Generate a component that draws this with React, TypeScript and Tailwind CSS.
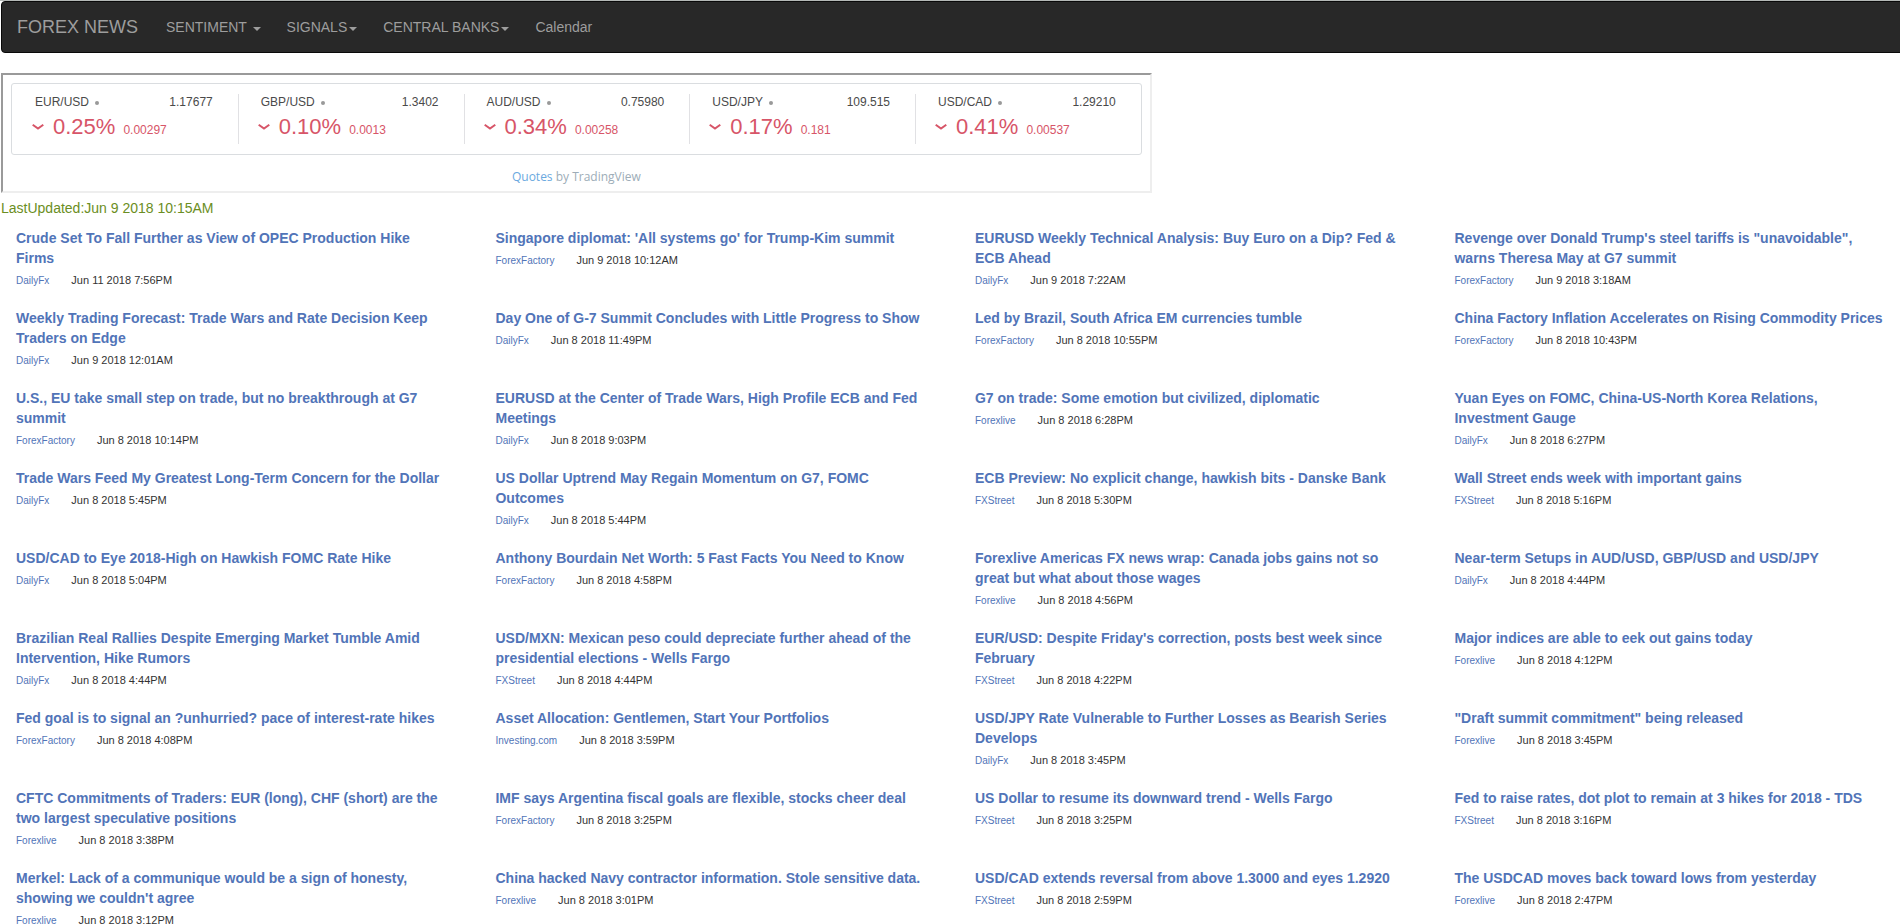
const MENUS = ["SENTIMENT ", "SIGNALS", "CENTRAL BANKS"];

const QUOTES = [
  { pair: "EUR/USD", price: "1.17677", percent: "0.25%", change: "0.00297" },
  { pair: "GBP/USD", price: "1.3402", percent: "0.10%", change: "0.0013" },
  { pair: "AUD/USD", price: "0.75980", percent: "0.34%", change: "0.00258" },
  { pair: "USD/JPY", price: "109.515", percent: "0.17%", change: "0.181" },
  { pair: "USD/CAD", price: "1.29210", percent: "0.41%", change: "0.00537" },
];

const NEWS: [string, string, string][] = [
  ["Crude Set To Fall Further as View of OPEC Production Hike Firms", "DailyFx", "Jun 11 2018 7:56PM"],
  ["Singapore diplomat: 'All systems go' for Trump-Kim summit", "ForexFactory", "Jun 9 2018 10:12AM"],
  ["EURUSD Weekly Technical Analysis: Buy Euro on a Dip? Fed & ECB Ahead", "DailyFx", "Jun 9 2018 7:22AM"],
  ["Revenge over Donald Trump's steel tariffs is \"unavoidable\", warns Theresa May at G7 summit", "ForexFactory", "Jun 9 2018 3:18AM"],
  ["Weekly Trading Forecast: Trade Wars and Rate Decision Keep Traders on Edge", "DailyFx", "Jun 9 2018 12:01AM"],
  ["Day One of G-7 Summit Concludes with Little Progress to Show", "DailyFx", "Jun 8 2018 11:49PM"],
  ["Led by Brazil, South Africa EM currencies tumble", "ForexFactory", "Jun 8 2018 10:55PM"],
  ["China Factory Inflation Accelerates on Rising Commodity Prices", "ForexFactory", "Jun 8 2018 10:43PM"],
  ["U.S., EU take small step on trade, but no breakthrough at G7 summit", "ForexFactory", "Jun 8 2018 10:14PM"],
  ["EURUSD at the Center of Trade Wars, High Profile ECB and Fed Meetings", "DailyFx", "Jun 8 2018 9:03PM"],
  ["G7 on trade: Some emotion but civilized, diplomatic", "Forexlive", "Jun 8 2018 6:28PM"],
  ["Yuan Eyes on FOMC, China-US-North Korea Relations, Investment Gauge", "DailyFx", "Jun 8 2018 6:27PM"],
  ["Trade Wars Feed My Greatest Long-Term Concern for the Dollar", "DailyFx", "Jun 8 2018 5:45PM"],
  ["US Dollar Uptrend May Regain Momentum on G7, FOMC Outcomes", "DailyFx", "Jun 8 2018 5:44PM"],
  ["ECB Preview: No explicit change, hawkish bits - Danske Bank", "FXStreet", "Jun 8 2018 5:30PM"],
  ["Wall Street ends week with important gains", "FXStreet", "Jun 8 2018 5:16PM"],
  ["USD/CAD to Eye 2018-High on Hawkish FOMC Rate Hike", "DailyFx", "Jun 8 2018 5:04PM"],
  ["Anthony Bourdain Net Worth: 5 Fast Facts You Need to Know", "ForexFactory", "Jun 8 2018 4:58PM"],
  ["Forexlive Americas FX news wrap: Canada jobs gains not so great but what about those wages", "Forexlive", "Jun 8 2018 4:56PM"],
  ["Near-term Setups in AUD/USD, GBP/USD and USD/JPY", "DailyFx", "Jun 8 2018 4:44PM"],
  ["Brazilian Real Rallies Despite Emerging Market Tumble Amid Intervention, Hike Rumors", "DailyFx", "Jun 8 2018 4:44PM"],
  ["USD/MXN: Mexican peso could depreciate further ahead of the presidential elections - Wells Fargo", "FXStreet", "Jun 8 2018 4:44PM"],
  ["EUR/USD: Despite Friday's correction, posts best week since February", "FXStreet", "Jun 8 2018 4:22PM"],
  ["Major indices are able to eek out gains today", "Forexlive", "Jun 8 2018 4:12PM"],
  ["Fed goal is to signal an ?unhurried? pace of interest-rate hikes", "ForexFactory", "Jun 8 2018 4:08PM"],
  ["Asset Allocation: Gentlemen, Start Your Portfolios", "Investing.com", "Jun 8 2018 3:59PM"],
  ["USD/JPY Rate Vulnerable to Further Losses as Bearish Series Develops", "DailyFx", "Jun 8 2018 3:45PM"],
  ["\"Draft summit commitment\" being released", "Forexlive", "Jun 8 2018 3:45PM"],
  ["CFTC Commitments of Traders: EUR (long), CHF (short) are the two largest speculative positions", "Forexlive", "Jun 8 2018 3:38PM"],
  ["IMF says Argentina fiscal goals are flexible, stocks cheer deal", "ForexFactory", "Jun 8 2018 3:25PM"],
  ["US Dollar to resume its downward trend - Wells Fargo", "FXStreet", "Jun 8 2018 3:25PM"],
  ["Fed to raise rates, dot plot to remain at 3 hikes for 2018 - TDS", "FXStreet", "Jun 8 2018 3:16PM"],
  ["Merkel: Lack of a communique would be a sign of honesty, showing we couldn't agree", "Forexlive", "Jun 8 2018 3:12PM"],
  ["China hacked Navy contractor information. Stole sensitive data.", "Forexlive", "Jun 8 2018 3:01PM"],
  ["USD/CAD extends reversal from above 1.3000 and eyes 1.2920", "FXStreet", "Jun 8 2018 2:59PM"],
  ["The USDCAD moves back toward lows from yesterday", "Forexlive", "Jun 8 2018 2:47PM"],
];

function Navbar() {
  return (
    <nav className="flex items-center rounded-l border border-[#090909] bg-[#282828] text-sm leading-5 text-[#9d9d9d]">
      <a href="#" className="px-[15px] py-[15px] text-lg leading-5">
        FOREX NEWS
      </a>
      {MENUS.map((label) => (
        <button key={label} type="button" className="flex items-center px-[13px] py-[15px] whitespace-pre">
          {label}
          <span className="ml-[2px] mt-1 border-x-4 border-t-4 border-x-transparent border-t-[#9d9d9d]" />
        </button>
      ))}
      <a href="#" className="px-[13px] py-[15px]">
        Calendar
      </a>
    </nav>
  );
}

function TickerWidget() {
  return (
    <section className="w-3/5 border-2 border-t-[#9a9a9a] border-r-[#eeeeee] border-b-[#eeeeee] border-l-[#9a9a9a] px-2 pt-2 pb-1">
      <div className="grid grid-cols-5 rounded-[3px] border border-[#dadde0] py-[10px]">
        {QUOTES.map((q) => (
          <div key={q.pair} className="h-[50px] border-l border-[#e1e1e4] pr-[25px] pl-[22px] first:border-transparent">
            <div className="flex items-center justify-between text-xs leading-4 text-[#4a4a4a]">
              <span className="flex items-center gap-[6px]">
                {q.pair}
                <span className="mt-[2px] size-1 rounded-full bg-[#999999]" />
              </span>
              <span>{q.price}</span>
            </div>
            <div className="flex items-baseline pt-[5px] text-[#d75568]">
              <svg viewBox="0 0 12 14" className="-ml-[3px] h-[14px] w-3" fill="none" stroke="currentColor" strokeWidth="2">
                <path d="M0.7 4.7 L6 8.5 L11.3 4.7" />
              </svg>
              <span className="ml-[9px] text-[22px] leading-6">{q.percent}</span>
              <span className="ml-2 text-xs leading-6">{q.change}</span>
            </div>
          </div>
        ))}
      </div>
      <p className="pt-3 text-center font-['Open_Sans',sans-serif] text-xs leading-5 text-[#9dadb8]">
        <a href="#" className="text-[#6ba9e0]">
          Quotes
        </a>{" "}
        by TradingView
      </p>
    </section>
  );
}

export default function App() {
  return (
    <div className="overflow-x-hidden border-t border-[#b4b8b6] bg-white pl-px font-['Liberation_Sans',Arial,sans-serif] text-sm leading-5 text-[#333333]">
      <div className="w-[101%]">
        <Navbar />
        <main className="pt-5">
          <TickerWidget />
          <p className="pt-[5px] text-[#6b8e23]">LastUpdated:Jun 9 2018 10:15AM</p>
          <div className="grid grid-cols-4 gap-y-5 pt-[10px]">
            {NEWS.map(([title, source, date]) => (
              <article key={title} className="pr-8 pl-[15px]">
                <h2 className="font-bold text-[#5174b8]">
                  <a href="#">{title}</a>
                </h2>
                <p className="flex h-5 items-baseline gap-[22px] pt-1 text-[10px] leading-4">
                  <a href="#" className="text-[#5174b8]">
                    {source}
                  </a>
                  <time className="text-[11px] leading-4">{date}</time>
                </p>
              </article>
            ))}
          </div>
        </main>
      </div>
    </div>
  );
}
